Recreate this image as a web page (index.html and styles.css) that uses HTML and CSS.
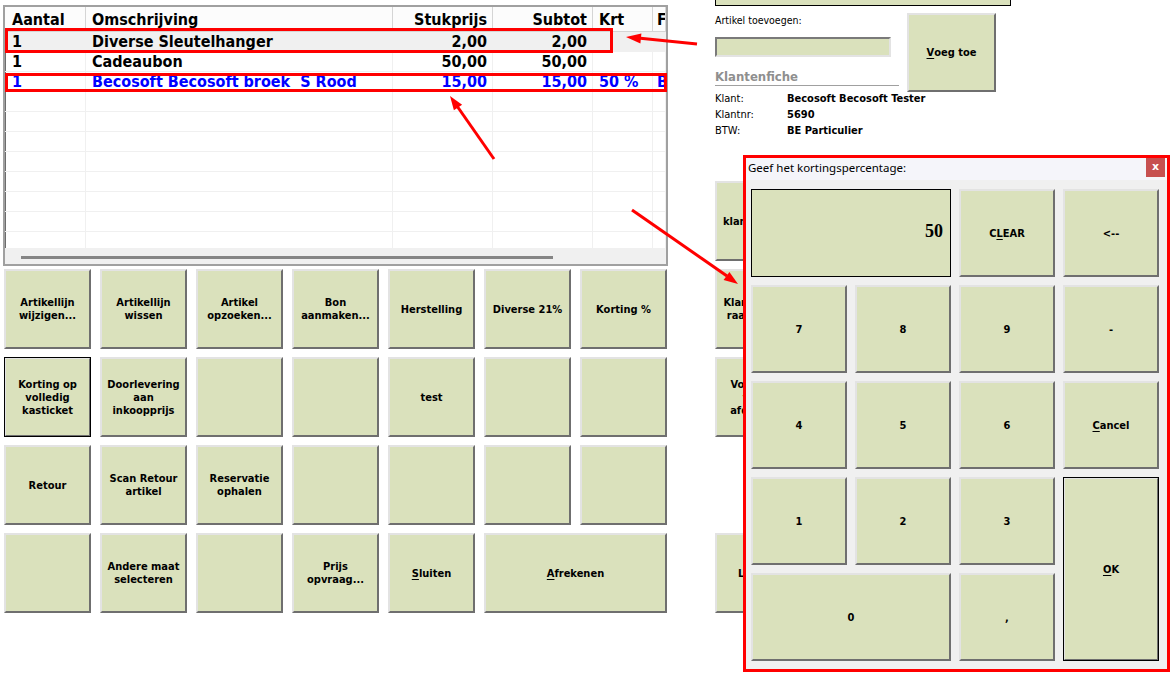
FILE: index.html
```html
<!DOCTYPE html>
<html lang="nl">
<head>
  <meta charset="UTF-8">
  <title>Kassa</title>
  <link rel="stylesheet" href="styles.css">
</head>
<body>

<div class="page">
  <div class="left">
    <!-- Ticketlijnen -->
    <div class="grid">
      <div class="gline head">
        <div class="c c1">Aantal</div>
        <div class="c c2">Omschrijving</div>
        <div class="c c3">Stukprijs</div>
        <div class="c c4">Subtot</div>
        <div class="c c5">Krt</div>
        <div class="c c6">F</div>
      </div>
      <div class="body">
        <div class="gline sel">
          <div class="c c1">1</div>
          <div class="c c2">Diverse Sleutelhanger</div>
          <div class="c c3">2,00</div>
          <div class="c c4">2,00</div>
          <div class="c c5"></div>
          <div class="c c6"></div>
        </div>
        <div class="gline">
          <div class="c c1">1</div>
          <div class="c c2">Cadeaubon</div>
          <div class="c c3">50,00</div>
          <div class="c c4">50,00</div>
          <div class="c c5"></div>
          <div class="c c6"></div>
        </div>
        <div class="gline blue">
          <div class="c c1">1</div>
          <div class="c c2">Becosoft Becosoft broek  S Rood</div>
          <div class="c c3">15,00</div>
          <div class="c c4">15,00</div>
          <div class="c c5">50 %</div>
          <div class="c c6">B</div>
        </div>
        <div class="gline"><div class="c c1"></div><div class="c c2"></div><div class="c c3"></div><div class="c c4"></div><div class="c c5"></div><div class="c c6"></div></div>
        <div class="gline"><div class="c c1"></div><div class="c c2"></div><div class="c c3"></div><div class="c c4"></div><div class="c c5"></div><div class="c c6"></div></div>
        <div class="gline"><div class="c c1"></div><div class="c c2"></div><div class="c c3"></div><div class="c c4"></div><div class="c c5"></div><div class="c c6"></div></div>
        <div class="gline"><div class="c c1"></div><div class="c c2"></div><div class="c c3"></div><div class="c c4"></div><div class="c c5"></div><div class="c c6"></div></div>
        <div class="gline"><div class="c c1"></div><div class="c c2"></div><div class="c c3"></div><div class="c c4"></div><div class="c c5"></div><div class="c c6"></div></div>
        <div class="gline"><div class="c c1"></div><div class="c c2"></div><div class="c c3"></div><div class="c c4"></div><div class="c c5"></div><div class="c c6"></div></div>
        <div class="gline"><div class="c c1"></div><div class="c c2"></div><div class="c c3"></div><div class="c c4"></div><div class="c c5"></div><div class="c c6"></div></div>
        <div class="gline"><div class="c c1"></div><div class="c c2"></div><div class="c c3"></div><div class="c c4"></div><div class="c c5"></div><div class="c c6"></div></div>
      </div>
      <div class="hscroll"><div class="thumb"></div></div>
    </div>

    <!-- Functieknoppen -->
    <div class="buttons">
      <div class="btn">Artikellijn<br>wijzigen...</div>
      <div class="btn">Artikellijn<br>wissen</div>
      <div class="btn">Artikel<br>opzoeken...</div>
      <div class="btn">Bon<br>aanmaken...</div>
      <div class="btn">Herstelling</div>
      <div class="btn">Diverse 21%</div>
      <div class="btn">Korting %</div>

      <div class="btn focus">Korting op<br>volledig<br>kasticket</div>
      <div class="btn">Doorlevering<br>aan<br>inkoopprijs</div>
      <div class="btn"></div>
      <div class="btn"></div>
      <div class="btn">test</div>
      <div class="btn"></div>
      <div class="btn"></div>

      <div class="btn">Retour</div>
      <div class="btn">Scan Retour<br>artikel</div>
      <div class="btn">Reservatie<br>ophalen</div>
      <div class="btn"></div>
      <div class="btn"></div>
      <div class="btn"></div>
      <div class="btn"></div>

      <div class="btn"></div>
      <div class="btn">Andere maat<br>selecteren</div>
      <div class="btn"></div>
      <div class="btn">Prijs<br>opvraag...</div>
      <div class="btn"><u>S</u>luiten</div>
      <div class="btn wide"><u>A</u>frekenen</div>
    </div>
  </div>

  <div class="right">
    <div class="topbox"></div>
    <div class="add">
      <div class="add-left">
        <div class="small">Artikel toevoegen:</div>
        <div class="field"></div>
        <div class="fiche">Klantenfiche</div>
        <div class="info">
          <div class="info-row"><span class="lbl">Klant:</span><b>Becosoft Becosoft Tester</b></div>
          <div class="info-row"><span class="lbl">Klantnr:</span><b>5690</b></div>
          <div class="info-row"><span class="lbl">BTW:</span><b>BE Particulier</b></div>
        </div>
      </div>
      <div class="btn add-btn"><u>V</u>oeg toe</div>
    </div>
    <div class="side">
      <div class="btn">klant zoeken</div>
      <div class="btn">Klantenfiche<br>raadplegen</div>
      <div class="btn">Voorschot<br>ticket<br>afdrukken</div>
      <div class="spacer"></div>
      <div class="btn">Loyalty</div>
    </div>
  </div>
</div>

<!-- Dialoog korting -->
<div class="dialog">
  <div class="titlebar">
    <span>Geef het kortingspercentage:</span>
    <span class="close">x</span>
  </div>
  <div class="dialog-body">
    <div class="keypad">
      <div class="display">50</div>
      <div class="btn"><span>C<u>L</u>EAR</span></div>
      <div class="btn">&lt;--</div>
      <div class="btn">7</div>
      <div class="btn">8</div>
      <div class="btn">9</div>
      <div class="btn">-</div>
      <div class="btn">4</div>
      <div class="btn">5</div>
      <div class="btn">6</div>
      <div class="btn"><span><u>C</u>ancel</span></div>
      <div class="btn">1</div>
      <div class="btn">2</div>
      <div class="btn">3</div>
      <div class="btn focus ok"><span><u>O</u>K</span></div>
      <div class="btn zero">0</div>
      <div class="btn">,</div>
    </div>
  </div>
</div>

<!-- Aanduidingen -->
<svg class="marks" width="1171" height="675" viewBox="0 0 1171 675">
  <g fill="none" stroke="#f00" stroke-width="3">
    <rect x="6.5" y="29.5" width="605" height="22"/>
    <rect x="6.5" y="74.5" width="659" height="16"/>
    <line x1="697" y1="44" x2="638" y2="38"/>
    <line x1="494" y1="159" x2="457" y2="106"/>
    <line x1="632" y1="210" x2="727" y2="276"/>
  </g>
  <g fill="#f00">
    <polygon points="626,37 641.4,33.4 640.4,43.4"/>
    <polygon points="450,96 462.1,104.7 453.9,110.3"/>
    <polygon points="738,284 723.6,280.1 729.4,271.9"/>
  </g>
</svg>

</body>
</html>
```

FILE: styles.css
```css
body {
  margin: 0;
  background-color: #fff;
  color: #000;
  font-family: "DejaVu Sans Condensed", "DejaVu Sans", sans-serif;
  font-stretch: condensed;
  overflow: hidden;
}

.page {
  display: flex;
  padding-left: 3px;
}

.left {
  width: 666px;
}

/* Raster met ticketlijnen */
.grid {
  margin-top: 5px;
  width: 665px;
  border: 2px solid #a0a0a0;
  box-shadow: inset 1px 1px 0 #6d6d6d;
  box-sizing: border-box;
  background-color: #fff;
}

.gline {
  display: grid;
  grid-template-columns: 81px 307px 100px 100px 60px 13px;
  font-size: 16px;
  font-weight: bold;
}

.gline .c {
  height: 20px;
  line-height: 19px;
  box-sizing: border-box;
  border-right: 1px solid #f0f0f0;
  border-bottom: 1px solid #f0f0f0;
  white-space: pre;
  overflow: hidden;
}

.head .c {
  height: 25px;
  padding-top: 2px;
  line-height: 22px;
  background-color: #fcfcfc;
  border-right: 1px solid #d5d5d5;
  border-bottom: 1px solid #d5d5d5;
}

.c1 { padding-left: 7px; }
.c2 { padding-left: 6px; }
.c3, .c4 { text-align: right; padding-right: 5px; }
.c5 { padding-left: 6px; }
.c6 { padding-left: 4px; }

.body {
  height: 216px;
  overflow: hidden;
}

.sel .c {
  background-color: #f0f0f0;
}

.blue {
  color: #0000ff;
}

.hscroll {
  height: 16px;
  background-color: #f0f0f0;
  padding-top: 8px;
  box-sizing: border-box;
}

.hscroll .thumb {
  margin-left: 16px;
  width: 532px;
  height: 3px;
  background-color: #858585;
}

/* Knoppen */
.btn {
  display: flex;
  align-items: center;
  justify-content: center;
  text-align: center;
  background-color: #dae1bc;
  border: 2px solid;
  border-color: #e3e3e3 #6f6f6f #6f6f6f #e3e3e3;
  box-sizing: border-box;
  font-size: 11px;
  font-weight: bold;
  line-height: 13px;
  color: #000;
}

.btn u {
  text-decoration-thickness: 1px;
  text-underline-offset: 2px;
}

.btn.focus {
  outline: 1px solid #000;
  outline-offset: -1px;
}

.buttons {
  margin-top: 3px;
  padding-left: 1px;
  display: grid;
  grid-template-columns: repeat(7, 87px);
  grid-auto-rows: 80px;
  column-gap: 9px;
  row-gap: 8px;
}

.buttons .wide {
  grid-column: span 2;
}

/* Rechterkant */
.right {
  margin-left: 46px;
  width: 300px;
}

.topbox {
  width: 296px;
  height: 6px;
  background-color: #dae1bc;
  border: 1px solid #000;
  border-top: none;
  box-sizing: border-box;
}

.add {
  display: flex;
  gap: 8px;
  margin-top: 7px;
}

.add-left {
  width: 184px;
}

.small {
  font-size: 10.5px;
  line-height: 14px;
}

.field {
  margin-top: 10px;
  width: 176px;
  height: 20px;
  background-color: #dae1bc;
  border: 2px solid;
  border-color: #7a7a7a #e3e3e3 #e3e3e3 #7a7a7a;
  box-sizing: border-box;
}

.fiche {
  margin-top: 12px;
  height: 17px;
  line-height: 16px;
  font-size: 13px;
  font-weight: bold;
  color: #8f8f8f;
  border-bottom: 1px solid #a0a0a0;
  box-sizing: border-box;
}

.info {
  margin-top: 5px;
  white-space: nowrap;
}

.info-row {
  font-size: 11px;
  line-height: 16px;
}

.info-row .lbl {
  display: inline-block;
  width: 72px;
}

.add-btn {
  width: 89px;
  height: 79px;
}

.side {
  margin-top: 42px;
  display: flex;
  flex-direction: column;
  gap: 8px;
}

.side .btn,
.side .spacer {
  width: 87px;
  height: 80px;
}

/* Dialoog */
.dialog {
  position: absolute;
  left: 743px;
  top: 155px;
  width: 427px;
  height: 517px;
  border: 3px solid #f00;
  box-sizing: border-box;
  background-color: #f0f0f0;
}

.titlebar {
  height: 22px;
  background-color: #f5f5fa;
  display: flex;
  justify-content: space-between;
  align-items: flex-start;
  padding-left: 2px;
  font-family: "Noto Sans", "DejaVu Sans", sans-serif;
  font-stretch: normal;
  font-size: 11.5px;
  line-height: 20px;
}

.close {
  width: 19px;
  height: 19px;
  margin-right: 2px;
  background-color: #c75050;
  color: #fff;
  font-family: "DejaVu Sans", sans-serif;
  font-size: 11px;
  font-weight: bold;
  line-height: 17px;
  text-align: center;
}

.dialog-body {
  padding: 9px 8px 8px 5px;
}

.keypad {
  display: grid;
  grid-template-columns: repeat(4, 96px);
  grid-template-rows: repeat(5, 88px);
  gap: 8px;
}

.display {
  grid-column: span 2;
  background-color: #dae1bc;
  border: 1px solid #000;
  display: flex;
  align-items: center;
  justify-content: flex-end;
  padding-right: 7px;
  padding-bottom: 4px;
  font-family: "Liberation Serif", serif;
  font-size: 18px;
  font-weight: bold;
}

.keypad .ok {
  grid-column: 4;
  grid-row: 4 / span 2;
}

.keypad .zero {
  grid-column: 1 / span 2;
}

.marks {
  position: absolute;
  left: 0;
  top: 0;
  pointer-events: none;
}
```
